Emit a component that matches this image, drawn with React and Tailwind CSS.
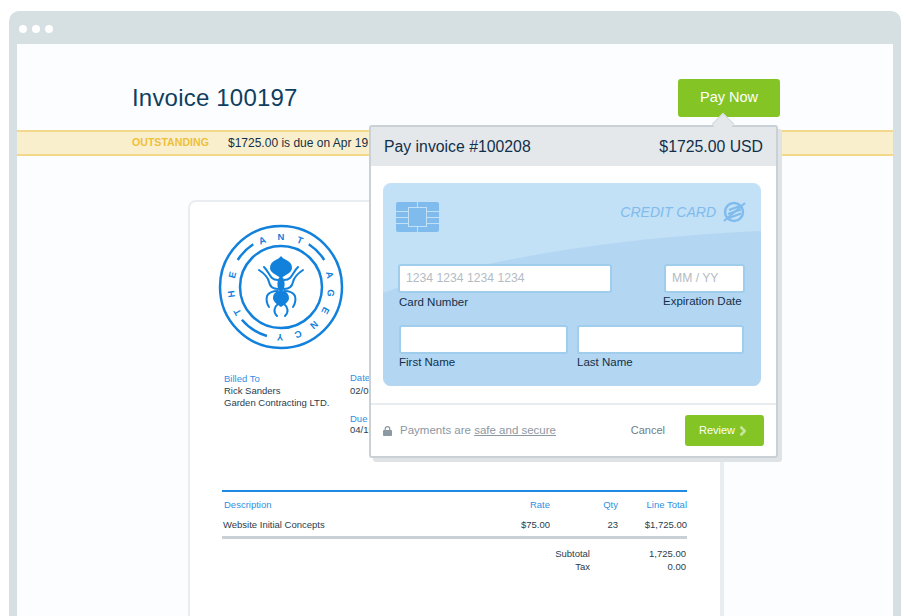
import { ChevronRight } from "lucide-react";

const logoLetters = [
  ["T", -120], ["H", -98], ["E", -76],
  ["A", -22], ["N", 0], ["T", 22],
  ["A", 76], ["G", 97], ["E", 118], ["N", 139], ["C", 160], ["Y", 181],
];

function arcPath(r, from, to) {
  const p = (a) => {
    const rad = (a * Math.PI) / 180;
    return `${(r * Math.sin(rad)).toFixed(2)} ${(-r * Math.cos(rad)).toFixed(2)}`;
  };
  return `M${p(from)} A${r} ${r} 0 0 1 ${p(to)}`;
}

function AntLogo() {
  return (
    <svg width="128" height="128" viewBox="-64 -64 128 128" className="block text-[#1281dc]">
      <g fill="none" stroke="currentColor" strokeWidth="2.5">
        <circle r="61" />
        <circle r="41" />
        <path d={arcPath(51, -58, -33)} />
        <path d={arcPath(51, 33, 58)} />
        <path d={arcPath(51, -164, -130)} />
      </g>
      {logoLetters.map(([ch, angle], i) => (
        <text
          key={i}
          transform={`rotate(${angle}) translate(0 -47)`}
          textAnchor="middle"
          fontSize="9.5"
          fontWeight="700"
          fill="currentColor"
          fontFamily="Liberation Sans, sans-serif"
        >
          {ch}
        </text>
      ))}
      <g fill="currentColor">
        <path d="M0 -31C2 -27 11 -27 11 -19C11 -14 4 -12 0 -9C-4 -12 -11 -14 -11 -19C-11 -27 -2 -27 0 -31Z" />
        <ellipse cx="0" cy="-3" rx="3.6" ry="7.5" />
        <rect x="-1.6" y="0" width="3.2" height="6" />
        <path d="M0 4C5 3.5 8 7 8 11C8 15 3 18 0 20C-3 18 -8 15 -8 11C-8 7 -5 3.5 0 4Z" />
      </g>
      <g fill="none" stroke="currentColor" strokeWidth="2" strokeLinecap="round">
        <path d="M-22 -17C-16 -13 -13 -10 -12 -5C-11 0 -8 2 -3 2" />
        <path d="M22 -17C16 -13 13 -10 12 -5C11 0 8 2 3 2" />
        <path d="M-17 -20C-13 -16 -12 -12 -9 -9C-7 -7 -5 -7 -3 -7" />
        <path d="M17 -20C13 -16 12 -12 9 -9C7 -7 5 -7 3 -7" />
        <path d="M-3 4C-8 4 -12 5 -14 9C-15 13 -14 17 -12 20" />
        <path d="M3 4C8 4 12 5 14 9C15 13 14 17 12 20" />
        <path d="M-3 17C-7 20 -8 25 -4 29" />
        <path d="M3 17C7 20 8 25 4 29" />
      </g>
    </svg>
  );
}

function ChipIcon() {
  return (
    <svg width="43" height="30" viewBox="0 0 43 30" className="block">
      <rect width="43" height="30" rx="2" fill="#7fbbec" />
      <g stroke="#c2e0f6" strokeWidth="1" fill="none">
        <path d="M0 9.5H12M0 15.5H12M0 21.5H12M31 9.5H43M31 15.5H43M31 21.5H43M21.5 0V5M21.5 25V30" />
        <rect x="12.5" y="5.5" width="18" height="19" />
      </g>
    </svg>
  );
}

function CardBrandIcon() {
  return (
    <svg width="23" height="22" viewBox="0 0 23 22" className="block">
      <g fill="none" stroke="#7fbbec">
        <circle cx="11" cy="11" r="9" strokeWidth="2.4" />
        <path d="M6 9L17 5M5 13L18 8.5M6 17L18 12.5" strokeWidth="2" />
        <path d="M1 20L22 2" strokeWidth="2" />
      </g>
    </svg>
  );
}

function LockIcon() {
  return (
    <svg width="9" height="10" viewBox="0 0 9 10" className="block shrink-0">
      <path d="M2.2 4.5V3a2.3 2.3 0 0 1 4.6 0v1.5" fill="none" stroke="#8c98a3" strokeWidth="1.2" />
      <rect y="4" width="9" height="6" rx="1" fill="#8c98a3" />
    </svg>
  );
}

function CardField({ label, placeholder, className, labelClass }) {
  return (
    <div className={className}>
      <div className="h-[29px] rounded-[3px] border-2 border-[#a0cdeb] bg-white pl-[6px] text-[12.2px] leading-[25px] text-[#b4bcc4]">
        {placeholder}
      </div>
      <div className={`text-[11.5px] leading-4 text-[#12304a] ${labelClass}`}>{label}</div>
    </div>
  );
}

function PayModal() {
  return (
    <div className="absolute left-[369px] top-[125px] z-10 w-[409px] rounded-[3px] border-2 border-[#c9d0d6] bg-white shadow-[4px_4px_0_#dfe3e6]">
      <div className="absolute right-[45px] top-[-11px] h-4 w-4 rotate-45 border-l border-t border-[#d3d9de] bg-[#e4e8eb]" />
      <div className="relative flex h-[39px] items-center justify-between bg-[#e4e8eb] px-[13px] text-[15.8px] text-[#12304a]">
        <span>Pay invoice #100208</span>
        <span>$1725.00 USD</span>
      </div>
      <div className="px-[12px] pt-[17px]">
        <div className="relative h-[203px] w-[378px] overflow-hidden rounded-lg bg-[#c2e0f6]">
          <svg width="378" height="203" viewBox="0 0 378 203" className="absolute inset-0">
            <path d="M0 110C100 75 240 54 378 48V203H0Z" fill="#b3d6f3" />
          </svg>
          <div className="relative px-[13px] pt-[18px]">
            <div className="flex items-center justify-between pr-[2px]">
              <ChipIcon />
              <div className="mb-[10px] flex items-center gap-[7px]">
                <span className="text-[14px] italic text-[#7fbbec]">CREDIT CARD</span>
                <CardBrandIcon />
              </div>
            </div>
            <div className="mt-[31px] flex justify-between pl-[2px] pr-[3px]">
              <CardField className="w-[214px]" label="Card Number" placeholder="1234 1234 1234 1234" labelClass="mt-[1px] pl-[1px]" />
              <CardField className="w-[81px]" label="Expiration Date" placeholder="MM / YY" labelClass="-ml-[1px] whitespace-nowrap" />
            </div>
            <div className="mt-[15px] flex gap-[9px] pl-[3px] pr-[4px]">
              <CardField className="w-[169px]" label="First Name" />
              <CardField className="flex-1" label="Last Name" />
            </div>
          </div>
        </div>
      </div>
      <div className="mt-[17px] flex h-[53px] items-center border-t-2 border-[#e8ecee] pl-[12px] pr-[12px]">
        <LockIcon />
        <span className="ml-[8px] text-[11.5px] text-[#8c98a3]">
          Payments are <span className="underline">safe and secure</span>
        </span>
        <span className="ml-auto text-[11px] text-[#6f7c88]">Cancel</span>
        <button className="ml-[20px] flex h-[31px] w-[79px] items-center justify-center rounded-[3px] bg-[#84c424] text-[11px] text-white">
          Review
          <ChevronRight size={14} strokeWidth={4.5} className="ml-[1px] text-[#c6e59c]" />
        </button>
      </div>
    </div>
  );
}

function Paper() {
  return (
    <div className="ml-[171px] mt-[44px] h-[500px] w-[536px] rounded-lg border-2 border-r-4 border-[#e9edf0] bg-white text-[9.5px] text-[#2b3c4c]">
      <div className="pl-[27px] pt-[21px]">
        <AntLogo />
      </div>
      <div className="mt-[22px] flex pl-[34px] leading-[12.5px]">
        <div className="w-[126px]">
          <div className="text-[#2f8fdf]">Billed To</div>
          <div className="-mt-px">Rick Sanders</div>
          <div>Garden Contracting LTD.</div>
        </div>
        <div className="-mt-px">
          <div className="text-[#2f8fdf]">Date of Issue</div>
          <div>02/01/2016</div>
          <div className="mt-[16px] text-[#2f8fdf]">Due Date</div>
          <div className="-mt-[2px]">04/19/2016</div>
        </div>
      </div>
      <div className="ml-[32px] mt-[54px] w-[465px]">
        <div className="grid grid-cols-[1fr_60px_68px_69px] border-t-2 border-[#1f8ae2] pt-[7px] text-right leading-3 text-[#2f8fdf]">
          <div className="pl-[2px] text-left">Description</div>
          <div>Rate</div>
          <div>Qty</div>
          <div>Line Total</div>
        </div>
        <div className="mt-[8px] grid grid-cols-[1fr_60px_68px_69px] border-b-[3px] border-[#c9d0d6] pb-[5px] text-right leading-3">
          <div className="pl-[1px] text-left">Website Initial Concepts</div>
          <div>$75.00</div>
          <div>23</div>
          <div>$1,725.00</div>
        </div>
        <div className="mt-[8px] grid grid-cols-[1fr_96px] pr-[1px] text-right leading-[13px]">
          <div>Subtotal</div>
          <div>1,725.00</div>
          <div>Tax</div>
          <div>0.00</div>
        </div>
      </div>
    </div>
  );
}

export default function App() {
  return (
    <div className="relative h-[616px] w-[910px] overflow-hidden bg-white font-['Liberation_Sans',sans-serif]">
      <div className="ml-[9px] mt-[11px] h-[605px] w-[892px] rounded-t-[10px] bg-[#d6dfe1] px-2 pt-[33px]">
        <div className="flex gap-[5px] pl-[2px] -mt-[19px] mb-[11px]">
          <span className="h-2 w-2 rounded-full bg-white" />
          <span className="h-2 w-2 rounded-full bg-white" />
          <span className="h-2 w-2 rounded-full bg-white" />
        </div>
        <div className="h-[572px] w-[876px] bg-[#fcfdff]">
          <div className="flex h-[86px] items-start justify-between pl-[115px] pr-[113px]">
            <h1 className="mt-[39px] text-[24px] leading-[30px] tracking-[0.2px] text-[#0f3f5f]">Invoice 100197</h1>
            <button className="mt-[35px] h-[38px] w-[102px] rounded-[3px] bg-[#84c424] text-[14.5px] text-white">Pay Now</button>
          </div>
          <div className="flex h-[26px] items-center border-y-2 border-[#f2d88a] bg-[#f9efcd] pl-[115px] text-[12px]">
            <span className="w-[96px] text-[10.6px] font-bold text-[#eec03c]">OUTSTANDING</span>
            <span className="text-[#12304a]">$1725.00 is due on Apr 19</span>
          </div>
          <Paper />
        </div>
      </div>
      <PayModal />
    </div>
  );
}
